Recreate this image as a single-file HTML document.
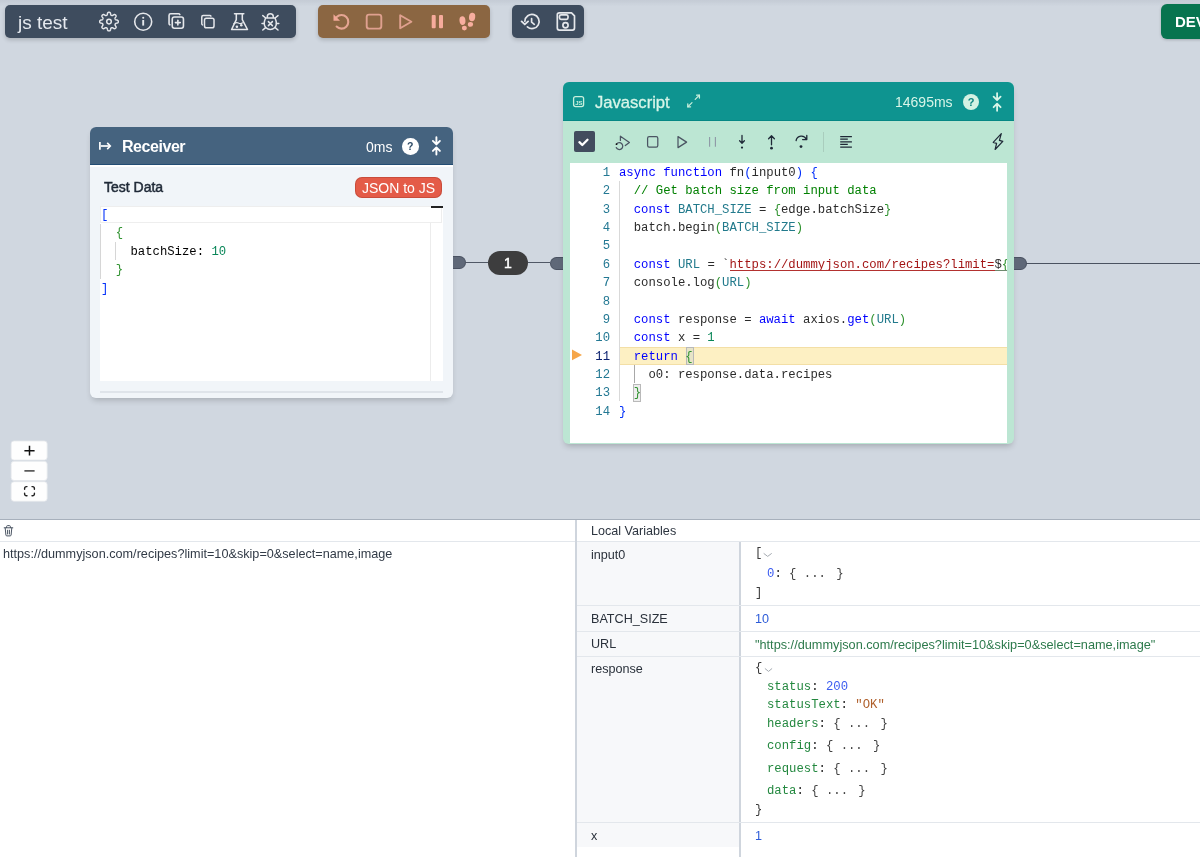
<!DOCTYPE html>
<html><head><meta charset="utf-8">
<style>
*{box-sizing:border-box;margin:0;padding:0}
html,body{width:1200px;height:857px;overflow:hidden}
body{position:relative;background:#d0d7e0;font-family:"Liberation Sans",sans-serif;}
.abs{position:absolute;white-space:pre;will-change:transform}
.tb{position:absolute;top:5px;height:33px;border-radius:5px;box-shadow:0 2px 4px rgba(0,0,0,.18)}
svg.ov{position:absolute;left:0;top:0;width:1200px;height:857px;overflow:visible;z-index:10}
.mono{font-family:"Liberation Mono",monospace}
.k{color:#0000ff}.b1{color:#0431fa}.b2{color:#319331}.c{color:#008000}.t{color:#227a8c}.s{color:#a31515}.n{color:#098658}.g{color:#23883f}
</style></head><body>

<div class="abs" style="left:0;top:0;width:1200px;height:6px;background:linear-gradient(rgba(60,70,90,.08),rgba(60,70,90,0))"></div>
<!-- toolbar 1 -->
<div class="tb" style="left:5px;width:291px;background:#3e4c5e"></div>
<div class="abs" style="left:18px;top:11px;font-size:19px;line-height:24px;color:#e5e9ef">js test</div>

<!-- toolbar 2 orange -->
<div class="tb" style="left:318px;width:172px;background:#8b6642"></div>

<!-- toolbar 3 -->
<div class="tb" style="left:512px;width:72px;background:#3e4c5e"></div>

<!-- DEV -->
<div class="abs" style="left:1161px;top:4px;width:60px;height:35px;border-radius:6px;background:#07744f;box-shadow:0 1px 3px rgba(0,0,0,.2)"></div>
<div class="abs" style="left:1175px;top:13px;font-size:15px;line-height:18px;font-weight:bold;color:#fff">DEV</div>

<!--NODES--><!-- Receiver node -->
<div class="abs" style="left:90px;top:127px;width:363px;height:271px;border-radius:6px;background:#f1f5f9;box-shadow:0 4px 6px -2px rgba(0,0,0,.2);overflow:hidden">
  <div class="abs" style="left:0;top:0;width:363px;height:38px;background:#45637f;border-bottom:1px solid #234d74"></div><div class="abs" style="left:0;top:38px;width:363px;height:1.6px;background:#fff"></div>
</div>
<div class="abs" style="left:121.5px;top:137.5px;font-size:16px;line-height:18px;font-weight:bold;color:#fff;letter-spacing:-0.45px">Receiver</div>
<div class="abs" style="left:366px;top:138.5px;font-size:14px;line-height:16px;color:#fff">0ms</div>
<div class="abs" style="left:401.8px;top:137.8px;width:16.6px;height:16.6px;border-radius:50%;background:#fff"></div>
<div class="abs" style="left:103.5px;top:179px;font-size:14px;line-height:16px;color:#1f2937;-webkit-text-stroke:0.5px #1f2937">Test Data</div>
<div class="abs" style="left:355px;top:177px;width:87px;height:21px;border-radius:7px;background:#e45b48;box-shadow:inset 0 0 0 1px rgba(120,30,20,.25)"></div>
<div class="abs" style="left:355px;top:179.5px;width:87px;text-align:center;font-size:14px;line-height:16px;color:#fff">JSON to JS</div>
<!-- receiver editor -->
<div class="abs" style="left:100px;top:206px;width:342.5px;height:174.5px;background:#fff"></div>
<div class="abs" style="left:100px;top:206.2px;width:342px;height:17.4px;border:1px solid #eeeeee"></div>
<div class="abs" style="left:430px;top:223px;width:1px;height:157.5px;background:#ececec"></div>
<div class="abs" style="left:431px;top:206px;width:11.5px;height:2px;background:#222"></div>
<div class="abs" style="left:100px;top:390.6px;width:342.5px;height:2px;background:#dfe4ea"></div>
<div class="abs" style="left:100px;top:224px;width:1px;height:55px;background:#d6d6d6"></div>
<div class="abs" style="left:115px;top:242px;width:1px;height:18px;background:#d6d6d6"></div>
<div class="abs mono" style="left:101px;top:205.5px;font-size:12.28px;line-height:18.38px;color:#000"><span style="color:#0431fa">[</span>
  <span style="color:#319331">{</span>
    batchSize: <span style="color:#098658">10</span>
  <span style="color:#319331">}</span>
<span style="color:#0431fa">]</span></div>

<!-- edges -->
<div class="abs" style="left:466px;top:262px;width:22px;height:1.4px;background:#505866"></div>
<div class="abs" style="left:528px;top:262.4px;width:22px;height:1.4px;background:#505866"></div>
<div class="abs" style="left:1026px;top:262.7px;width:174px;height:1.2px;background:#4a5260"></div>
<div class="abs" style="left:488px;top:251px;width:40px;height:24px;border-radius:12px;background:#3d3d3e"></div>
<div class="abs" style="left:488px;top:255px;width:40px;text-align:center;font-size:14px;line-height:16px;color:#fff;-webkit-text-stroke:0.5px #fff">1</div>
<div class="abs" style="left:452.7px;top:256px;width:13px;height:12.7px;border-radius:0 6.5px 6.5px 0;background:#5f6878;border:1px solid #4a5262;border-left:none"></div>
<div class="abs" style="left:549.6px;top:256.8px;width:13px;height:13px;border-radius:6.5px 0 0 6.5px;background:#5f6878;border:1px solid #4a5262;border-right:none"></div>

<!-- JS node -->
<div class="abs" style="left:563px;top:82px;width:451px;height:362px;border-radius:6px;background:#bce6d3;box-shadow:0 4px 6px -2px rgba(0,0,0,.22);overflow:hidden">
  <div class="abs" style="left:0;top:0.3px;width:451px;height:38.5px;background:#0e9490;border-bottom:1px solid #058884"></div>
  <div class="abs" style="left:6.6px;top:81px;width:437.4px;height:279.7px;background:#fff"></div>
</div>
<div class="abs" style="left:1013.6px;top:256.6px;width:13px;height:13.3px;border-radius:0 6.5px 6.5px 0;background:#5f6878;border:1px solid #4a5262;border-left:none"></div>
<div class="abs" style="left:594.5px;top:93.6px;font-size:16.6px;line-height:18px;color:#d8f5e8;-webkit-text-stroke:0.3px #d8f5e8">Javascript</div>
<div class="abs" style="left:895px;top:93.5px;font-size:14px;line-height:16px;color:#d8f5e8">14695ms</div>
<div class="abs" style="left:963px;top:93.9px;width:16px;height:16px;border-radius:50%;background:#d3f2e3"></div>
<div class="abs" style="left:574px;top:131.3px;width:21px;height:21.2px;border-radius:2px;background:#424c5e"></div>
<div class="abs" style="left:823px;top:132px;width:1px;height:20px;background:#a9cdbd"></div>
<!--/NODES-->
<!--JS--><!-- JS editor content -->
<div class="abs" style="left:619px;top:346.8px;width:388px;height:17.8px;background:#fdf0c3;border-top:1px solid #f3dfa6;border-bottom:1px solid #f3dfa6"></div>
<div class="abs" style="left:685.5px;top:347px;width:7.6px;height:17.5px;background:#e7e4c7;border:1px solid #b9b9b9"></div>
<div class="abs" style="left:633.4px;top:383.5px;width:7.6px;height:17.5px;background:#eeeeee;border:1px solid #b9b9b9"></div>
<div class="abs" style="left:619px;top:181.4px;width:1px;height:220px;background:#d9d9d9"></div>
<div class="abs" style="left:634px;top:365px;width:1.4px;height:18.4px;background:#a8a8a8"></div>
<div class="abs mono" style="left:575px;top:163.8px;width:35px;text-align:right;font-size:12.28px;line-height:18.36px;color:#237893">1
2
3
4
5
6
7
8
9
10
<span style="color:#0b216f">11</span>
12
13
14</div>
<div class="abs mono" style="left:619px;top:163.8px;width:388px;overflow:hidden;font-size:12.28px;line-height:18.36px;color:#2b2b2b"><span class="k">async</span> <span class="k">function</span> fn<span class="b1">(</span>input0<span class="b1">)</span> <span class="b1">{</span>
  <span class="c">// Get batch size from input data</span>
  <span class="k">const</span> <span class="t">BATCH_SIZE</span> = <span class="b2">{</span>edge.batchSize<span class="b2">}</span>
  batch.begin<span class="b2">(</span><span class="t">BATCH_SIZE</span><span class="b2">)</span>

  <span class="k">const</span> <span class="t">URL</span> = `<span class="s">https://dummyjson.com/recipes?limit=</span>$<span class="b2">{</span>edge.batchSize<span class="b2">}</span>
  console.log<span class="b2">(</span><span class="t">URL</span><span class="b2">)</span>

  <span class="k">const</span> response = <span class="k">await</span> axios.<span class="k">get</span><span class="b2">(</span><span class="t">URL</span><span class="b2">)</span>
  <span class="k">const</span> x = <span class="n">1</span>
  <span class="k">return</span> <span class="b2">{</span>
    o0: response.data.recipes
  <span class="b2">}</span>
<span class="b1">}</span></div>
<div class="abs" style="left:729.5px;top:270px;width:273px;height:1px;background:#b3312f"></div>
<div class="abs" style="left:995px;top:270px;width:12px;height:1px;background:#6e8a6e"></div>
<!--/JS-->

<!--PANEL--><!-- bottom panel -->
<div class="abs" style="left:0;top:518.6px;width:1200px;height:338.4px;background:#fff;border-top:1.2px solid #a7b0bc"></div>
<div class="abs" style="left:0;top:541px;width:1200px;height:1px;background:#e3e7ec"></div>
<div class="abs" style="left:575px;top:519.6px;width:1.5px;height:338px;background:#cfd5dd"></div>
<div class="abs" style="left:2.5px;top:547.2px;font-size:12.66px;line-height:15px;color:#323b47">https://dummyjson.com/recipes?limit=10&amp;skip=0&amp;select=name,image</div>
<div class="abs" style="left:590.8px;top:524.3px;font-size:12.6px;line-height:15px;color:#2d3540">Local Variables</div>
<!-- table -->
<div class="abs" style="left:576.5px;top:542px;width:163px;height:304.6px;background:#f7f8fa"></div>
<div class="abs" style="left:739px;top:542px;width:1.5px;height:315px;background:#cfd5dd"></div>
<div class="abs" style="left:576.5px;top:605.3px;width:623.5px;height:1px;background:#e3e7ec"></div>
<div class="abs" style="left:576.5px;top:631.2px;width:623.5px;height:1px;background:#e3e7ec"></div>
<div class="abs" style="left:576.5px;top:656px;width:623.5px;height:1px;background:#e3e7ec"></div>
<div class="abs" style="left:576.5px;top:822.1px;width:623.5px;height:1px;background:#e3e7ec"></div>
<div class="abs" style="left:590.8px;top:547.6px;font-size:12.6px;line-height:15px;color:#2a313b">input0</div>
<div class="abs" style="left:590.8px;top:612.3px;font-size:12.6px;line-height:15px;color:#2a313b">BATCH_SIZE</div>
<div class="abs" style="left:590.8px;top:637.2px;font-size:12.6px;line-height:15px;color:#2a313b">URL</div>
<div class="abs" style="left:590.8px;top:662.3px;font-size:12.6px;line-height:15px;color:#2a313b">response</div>
<div class="abs" style="left:590.8px;top:828.6px;font-size:12.6px;line-height:15px;color:#2a313b">x</div>
<div class="abs" style="left:755.3px;top:612.3px;font-size:12.6px;line-height:15px;color:#2c5bd8">10</div>
<div class="abs" style="left:755.3px;top:637.2px;font-size:12.72px;line-height:15px;color:#2d7a4c">"https://dummyjson.com/recipes?limit=10&amp;skip=0&amp;select=name,image"</div>
<div class="abs" style="left:755.3px;top:828.6px;font-size:12.6px;line-height:15px;color:#2c5bd8">1</div>
<!-- mono values -->
<div class="abs mono" style="left:755px;top:546.2px;font-size:12.28px;line-height:15px;color:#3a3a3a">[</div>
<div class="abs mono" style="left:766.5px;top:566.8px;font-size:12.28px;line-height:15px;color:#222"><span style="color:#3b5cf0">0</span>: <span style="color:#444">{ ...<span style="padding-left:3px"></span> }</span></div>
<div class="abs mono" style="left:755px;top:585.8px;font-size:12.28px;line-height:15px;color:#3a3a3a">]</div>
<div class="abs mono" style="left:755px;top:661px;font-size:12.28px;line-height:15px;color:#3a3a3a">{</div>
<div class="abs mono" style="left:766.5px;top:680px;font-size:12.28px;line-height:15px;color:#222"><span class="g">status</span>: <span style="color:#3b5cf0">200</span></div>
<div class="abs mono" style="left:766.5px;top:698.3px;font-size:12.28px;line-height:15px;color:#222"><span class="g">statusText</span>: <span style="color:#b0602c">"OK"</span></div>
<div class="abs mono" style="left:766.5px;top:717.3px;font-size:12.28px;line-height:15px;color:#222"><span class="g">headers</span>: <span style="color:#444">{ ...<span style="padding-left:3px"></span> }</span></div>
<div class="abs mono" style="left:766.5px;top:739.3px;font-size:12.28px;line-height:15px;color:#222"><span class="g">config</span>: <span style="color:#444">{ ...<span style="padding-left:3px"></span> }</span></div>
<div class="abs mono" style="left:766.5px;top:761.9px;font-size:12.28px;line-height:15px;color:#222"><span class="g">request</span>: <span style="color:#444">{ ...<span style="padding-left:3px"></span> }</span></div>
<div class="abs mono" style="left:766.5px;top:784.2px;font-size:12.28px;line-height:15px;color:#222"><span class="g">data</span>: <span style="color:#444">{ ...<span style="padding-left:3px"></span> }</span></div>
<div class="abs mono" style="left:755px;top:802.5px;font-size:12.28px;line-height:15px;color:#3a3a3a">}</div>
<!--/PANEL-->

<svg class="ov" viewBox="0 0 1200 857">
 <!-- toolbar1 icons -->
 <g fill="none" stroke="#e5e7eb" stroke-width="1.6" stroke-linejoin="round" stroke-linecap="round">
  <path d="M118.30 21.60 L118.28 21.96 L118.20 22.32 L118.01 22.67 L117.59 22.96 L116.85 23.16 L116.10 23.31 L115.66 23.48 L115.44 23.69 L115.30 23.92 L115.19 24.16 L115.10 24.41 L115.03 24.67 L115.04 24.98 L115.23 25.42 L115.65 26.04 L116.03 26.71 L116.13 27.22 L116.02 27.60 L115.82 27.90 L115.58 28.18 L115.30 28.42 L115.00 28.62 L114.62 28.73 L114.11 28.63 L113.44 28.25 L112.82 27.83 L112.38 27.64 L112.07 27.63 L111.81 27.70 L111.56 27.79 L111.32 27.90 L111.09 28.04 L110.88 28.26 L110.71 28.70 L110.56 29.45 L110.36 30.19 L110.07 30.61 L109.72 30.80 L109.36 30.88 L109.00 30.90 L108.64 30.88 L108.28 30.80 L107.93 30.61 L107.64 30.19 L107.44 29.45 L107.29 28.70 L107.12 28.26 L106.91 28.04 L106.68 27.90 L106.44 27.79 L106.19 27.70 L105.93 27.63 L105.62 27.64 L105.18 27.83 L104.56 28.25 L103.89 28.63 L103.38 28.73 L103.00 28.62 L102.70 28.42 L102.42 28.18 L102.18 27.90 L101.98 27.60 L101.87 27.22 L101.97 26.71 L102.35 26.04 L102.77 25.42 L102.96 24.98 L102.97 24.67 L102.90 24.41 L102.81 24.16 L102.70 23.92 L102.56 23.69 L102.34 23.48 L101.90 23.31 L101.15 23.16 L100.41 22.96 L99.99 22.67 L99.80 22.32 L99.72 21.96 L99.70 21.60 L99.72 21.24 L99.80 20.88 L99.99 20.53 L100.41 20.24 L101.15 20.04 L101.90 19.89 L102.34 19.72 L102.56 19.51 L102.70 19.28 L102.81 19.04 L102.90 18.79 L102.97 18.53 L102.96 18.22 L102.77 17.78 L102.35 17.16 L101.97 16.49 L101.87 15.98 L101.98 15.60 L102.18 15.30 L102.42 15.02 L102.70 14.78 L103.00 14.58 L103.38 14.47 L103.89 14.57 L104.56 14.95 L105.18 15.37 L105.62 15.56 L105.93 15.57 L106.19 15.50 L106.44 15.41 L106.68 15.30 L106.91 15.16 L107.12 14.94 L107.29 14.50 L107.44 13.75 L107.64 13.01 L107.93 12.59 L108.28 12.40 L108.64 12.32 L109.00 12.30 L109.36 12.32 L109.72 12.40 L110.07 12.59 L110.36 13.01 L110.56 13.75 L110.71 14.50 L110.88 14.94 L111.09 15.16 L111.32 15.30 L111.56 15.41 L111.81 15.50 L112.07 15.57 L112.38 15.56 L112.82 15.37 L113.44 14.95 L114.11 14.57 L114.62 14.47 L115.00 14.58 L115.30 14.78 L115.58 15.02 L115.82 15.30 L116.02 15.60 L116.13 15.98 L116.03 16.49 L115.65 17.16 L115.23 17.78 L115.04 18.22 L115.03 18.53 L115.10 18.79 L115.19 19.04 L115.30 19.28 L115.44 19.51 L115.66 19.72 L116.10 19.89 L116.85 20.04 L117.59 20.24 L118.01 20.53 L118.20 20.88 L118.28 21.24Z" stroke-width="1.45"/>
  <circle cx="109" cy="21.6" r="2.3" stroke-width="1.5"/>
  <circle cx="143.2" cy="21.75" r="8.5"/>
  <path d="M143.2 20v5.6" stroke-width="1.9" stroke-linecap="butt"/>
  <g transform="translate(166.65 11.4) scale(0.8)" stroke-width="2">
   <path d="M7 9.667a2.667 2.667 0 0 1 2.667 -2.667h8.666a2.667 2.667 0 0 1 2.667 2.667v8.666a2.667 2.667 0 0 1 -2.667 2.667h-8.666a2.667 2.667 0 0 1 -2.667 -2.667z"/>
   <path d="M4.012 16.737a2 2 0 0 1 -1.012 -1.737v-10c0 -1.1 .9 -2 2 -2h10c.75 0 1.158 .385 1.5 1"/>
   <path d="M11 14h6"/><path d="M14 11v6"/>
  </g>
  <g transform="translate(199.74 13.49) scale(0.68)" stroke-width="2.2">
   <path d="M7 9.667a2.667 2.667 0 0 1 2.667 -2.667h8.666a2.667 2.667 0 0 1 2.667 2.667v8.666a2.667 2.667 0 0 1 -2.667 2.667h-8.666a2.667 2.667 0 0 1 -2.667 -2.667z"/>
   <path d="M4.012 16.737a2 2 0 0 1 -1.012 -1.737v-10c0 -1.1 .9 -2 2 -2h10c.75 0 1.158 .385 1.5 1"/>
  </g>
  <path d="M234.5 13.7h9.3M236.3 13.7v5.9L231.6 29.5h15.9L242.3 19.6v-5.9" stroke-width="1.55"/>
  <path d="M233.9 23.6c1.6-0.9 3-1.3 4.4-0.6s2.9 0.9 4.2-0.2" stroke-width="1.2"/>
 </g>
 <circle cx="236.9" cy="26.7" r="1.3" fill="#e5e7eb"/>
 <circle cx="241.3" cy="25.3" r="1.3" fill="#e5e7eb"/>
 <!-- bug -->
 <g fill="none" stroke="#e5e7eb" stroke-width="1.5" stroke-linecap="round" stroke-linejoin="round">
  <path d="M267.3 17.5v-0.8a3 3 0 0 1 6 0v0.8"/>
  <path d="M265.6 18h9.4c0.9 2 1.4 4 1.4 5.6 0 3.2-2.7 5.8-6.1 5.8s-6.1-2.6-6.1-5.8c0-1.6 0.5-3.6 1.4-5.6z"/>
  <path d="M268.4 21.6l4 4M272.4 21.6l-4 4"/>
  <path d="M262 23.4h2.2M276.4 23.4h2.4M262.8 15.6l2.6 2.2M278 15.6l-2.6 2.2M262.8 30l2.8-2.4M278 30l-2.8-2.4"/>
 </g>

 <!-- orange toolbar icons -->
 <g fill="none" stroke="#dfa08f" stroke-width="1.9" stroke-linecap="round" stroke-linejoin="round">
  <path d="M336.7 17A6.8 6.8 0 1 1 336.6 26.6" stroke-width="2.1" stroke="#e6a593"/>
  <rect x="366.7" y="14.6" width="14.6" height="14" rx="2.4"/>
  <path d="M400.2 15.2v13.1l11.2-6.6z"/>
 </g>
 <path d="M333.5 14.2v6.5h6.5z" fill="#f2a898"/>
 <rect x="431.7" y="15" width="4" height="13.3" rx="1" fill="#f6ab9c"/>
 <rect x="439" y="15" width="4" height="13.3" rx="1" fill="#f6ab9c"/>
 <g fill="#f8ae9f">
  <ellipse cx="462.45" cy="20.6" rx="3" ry="4.4" transform="rotate(-5 462.45 20.6)"/>
  <ellipse cx="464.35" cy="28.1" rx="2.5" ry="2.3"/>
  <ellipse cx="472.1" cy="17" rx="3.1" ry="4.2" transform="rotate(8 472.1 17)"/>
  <ellipse cx="470.45" cy="24.4" rx="2.6" ry="2.3"/>
 </g>

 <!-- toolbar 3 icons -->
 <g fill="none" stroke="#e5e7eb" stroke-width="1.7" stroke-linecap="round" stroke-linejoin="round">
  <path d="M524.9 21.2A7.1 7.1 0 1 1 527.4 26.9"/>
  <path d="M521.6 21.4l3.2 3 3.3-3" stroke-width="1.9"/>
  <path d="M531.6 18.6v3.6l2.7 2.1"/>
  <path d="M559.3 12.8h12.2l3 3v12.3a2 2 0 0 1-2 2h-13.2a2 2 0 0 1-2-2v-13.3a2 2 0 0 1 2-2z"/>
  <rect x="559.5" y="14.8" width="8.5" height="4.5" rx="1.5"/>
  <circle cx="565.5" cy="25.2" r="2.6"/>
 </g>
<!--IC2--> <!-- info dot -->
 <circle cx="143.2" cy="17.7" r="1.05" fill="#e5e7eb"/>
 <!-- receiver header icons -->
 <g fill="none" stroke="#fff" stroke-width="1.7" stroke-linecap="butt" stroke-linejoin="miter">
  <path d="M99.9 142.1v7.6"/>
  <path d="M100.8 146h9.2"/>
  <path d="M107.2 142.9l3.1 3.1-3.1 3.1" stroke-width="1.6"/>
 </g>
 <text x="410.1" y="150" text-anchor="middle" font-family="Liberation Sans" font-weight="bold" font-size="10.5" fill="#2c4a66">?</text>
 <g fill="none" stroke="#fff" stroke-width="1.7" stroke-linecap="round" stroke-linejoin="round">
  <path d="M436.4 137.3v6.6M432.9 140.9l3.5 3.5 3.5-3.5" stroke-width="1.9"/>
  <path d="M436.4 154.5v-6.6M432.9 150.9l3.5-3.5 3.5 3.5" stroke-width="1.9"/>
 </g>
 <!-- JS header icons -->
 <g fill="none" stroke="#c9efdc" stroke-width="1.3" stroke-linecap="round" stroke-linejoin="round">
  <rect x="573.6" y="96.6" width="10" height="10" rx="2"/>
 </g>
 <text x="578.8" y="105.3" text-anchor="middle" font-family="Liberation Sans" font-weight="bold" font-size="6" fill="#c9efdc">JS</text>
 <g fill="none" stroke="#c9efdc" stroke-width="1.4" stroke-linecap="round" stroke-linejoin="round">
  <path d="M687.8 106.8l4.2-4.2M695.2 99.4l4.2-4.2" stroke-width="1.2"/>
  <path d="M687.8 104v2.8h2.8M696.6 95.2h2.8v2.8" stroke-width="1.3"/>
 </g>
 <text x="971" y="105.7" text-anchor="middle" font-family="Liberation Sans" font-weight="bold" font-size="11" fill="#0e8581">?</text>
 <g fill="none" stroke="#d8f5e8" stroke-width="1.6" stroke-linecap="round" stroke-linejoin="round">
  <path d="M997.1 93.1v6.6M993.6 96.7l3.5 3.5 3.5-3.5" stroke-width="1.8"/>
  <path d="M997.1 110.8v-6.6M993.6 107.2l3.5-3.5 3.5 3.5" stroke-width="1.8"/>
 </g>
 <!-- JS toolbar icons -->
 <path d="M579.4 142.2l2.9 2.8 5.2-5.2" fill="none" stroke="#fff" stroke-width="2.3" stroke-linecap="round" stroke-linejoin="round"/>
 <g fill="none" stroke="#4b5563" stroke-width="1.25" stroke-linecap="round" stroke-linejoin="round">
  <path d="M616.3 147.6A3.4 3.4 0 1 0 616.6 144.1"/>
  <path d="M620.4 140.4v-4.2l9 6.2-4.1 3.1"/>
  <rect x="647.6" y="136.6" width="10.2" height="10.4" rx="1.6"/>
  <path d="M678 136.6v11l8.6-5.5z"/>
 </g>
 <circle cx="616.5" cy="144.2" r="0.9" fill="#111"/>
 <g stroke="#8e98a6" stroke-width="1.1" fill="none"><path d="M709.6 137v9.8M715.4 137v9.8"/></g>
 <g fill="none" stroke="#1f2937" stroke-width="1.3" stroke-linecap="round" stroke-linejoin="round">
  <path d="M742 135.5v7.6M739.6 140.8l2.4 2.4 2.4-2.4"/>
  <path d="M771.5 144.8v-9M768.6 138.7l2.9-2.9 2.9 2.9"/>
  <path d="M796.1 140.5a5.4 5.4 0 0 1 10.2-1.2M806.8 135.4v4.2h-4.2"/>
  <path d="M840.2 136.7h11.7M840.2 139.2h7.6M840.2 141.9h11.7M840.2 144.3h7.6M840.2 147.1h11.7" stroke-linecap="butt" stroke-width="1.2"/>
  <path d="M1001.3 133.6L993.2 142.4L996.6 143.3L995.1 149.5L1002.8 141.3L999.4 140.4Z" stroke-width="1.2"/>
 </g>
 <circle cx="742" cy="147.6" r="1.1" fill="#1f2937"/>
 <circle cx="771.5" cy="148.2" r="1.4" fill="#1f2937"/>
 <circle cx="801" cy="146.6" r="1.4" fill="#1f2937"/>
 <!-- breakpoint arrow -->
 <path d="M572 349.6v10.6l10-5.3z" fill="#f6a64a"/>
<!--/IC2-->
<!--IC3--> <!-- zoom controls -->
 <g fill="#fefefe" stroke="#e4e7eb" stroke-width="0.8">
  <rect x="11.1" y="440.9" width="36.1" height="19.2" rx="3"/>
  <rect x="11.1" y="461.3" width="36.1" height="19.2" rx="3"/>
  <rect x="11.1" y="481.7" width="36.1" height="19.6" rx="3"/>
 </g>
 <g fill="none" stroke="#111" stroke-width="1.5">
  <path d="M24.4 450.7h10.2M29.5 445.8v9.8"/>
  <path d="M24.4 470.9h10.2" stroke="#333" stroke-width="1.4"/>
  <g stroke="#222" stroke-width="1.4" stroke-linecap="round">
   <path d="M24.6 489.2v-0.8a1.8 1.8 0 0 1 1.8-1.8h0.6"/>
   <path d="M32 486.6h0.6a1.8 1.8 0 0 1 1.8 1.8v0.8"/>
   <path d="M34.4 493.2v0.8a1.8 1.8 0 0 1-1.8 1.8h-0.6"/>
   <path d="M27 495.8h-0.6a1.8 1.8 0 0 1-1.8-1.8v-0.8"/>
  </g>
 </g>
 <!-- trash -->
 <g fill="none" stroke="#4b5563" stroke-width="1" stroke-linecap="round" stroke-linejoin="round">
  <path d="M4.2 527.8h8.6"/>
  <path d="M6.6 527.6v-1a1 1 0 0 1 1-1h1.8a1 1 0 0 1 1 1v1"/>
  <path d="M5.2 528l0.7 7a1 1 0 0 0 1 0.9h3.2a1 1 0 0 0 1-0.9l0.7-7"/>
  <path d="M7.6 530.2v3.8M9.4 530.2v3.8"/>
 </g>
 <!-- chevrons -->
 <g fill="none" stroke="#9aa0a8" stroke-width="0.9" stroke-linecap="round" stroke-linejoin="round">
  <path d="M764 553.6l3.7 2.8 3.7-2.8"/>
  <path d="M765.2 668.7l3.3 2.7 3.3-2.7"/>
 </g>
<!--/IC3-->
</svg>
</body></html>
